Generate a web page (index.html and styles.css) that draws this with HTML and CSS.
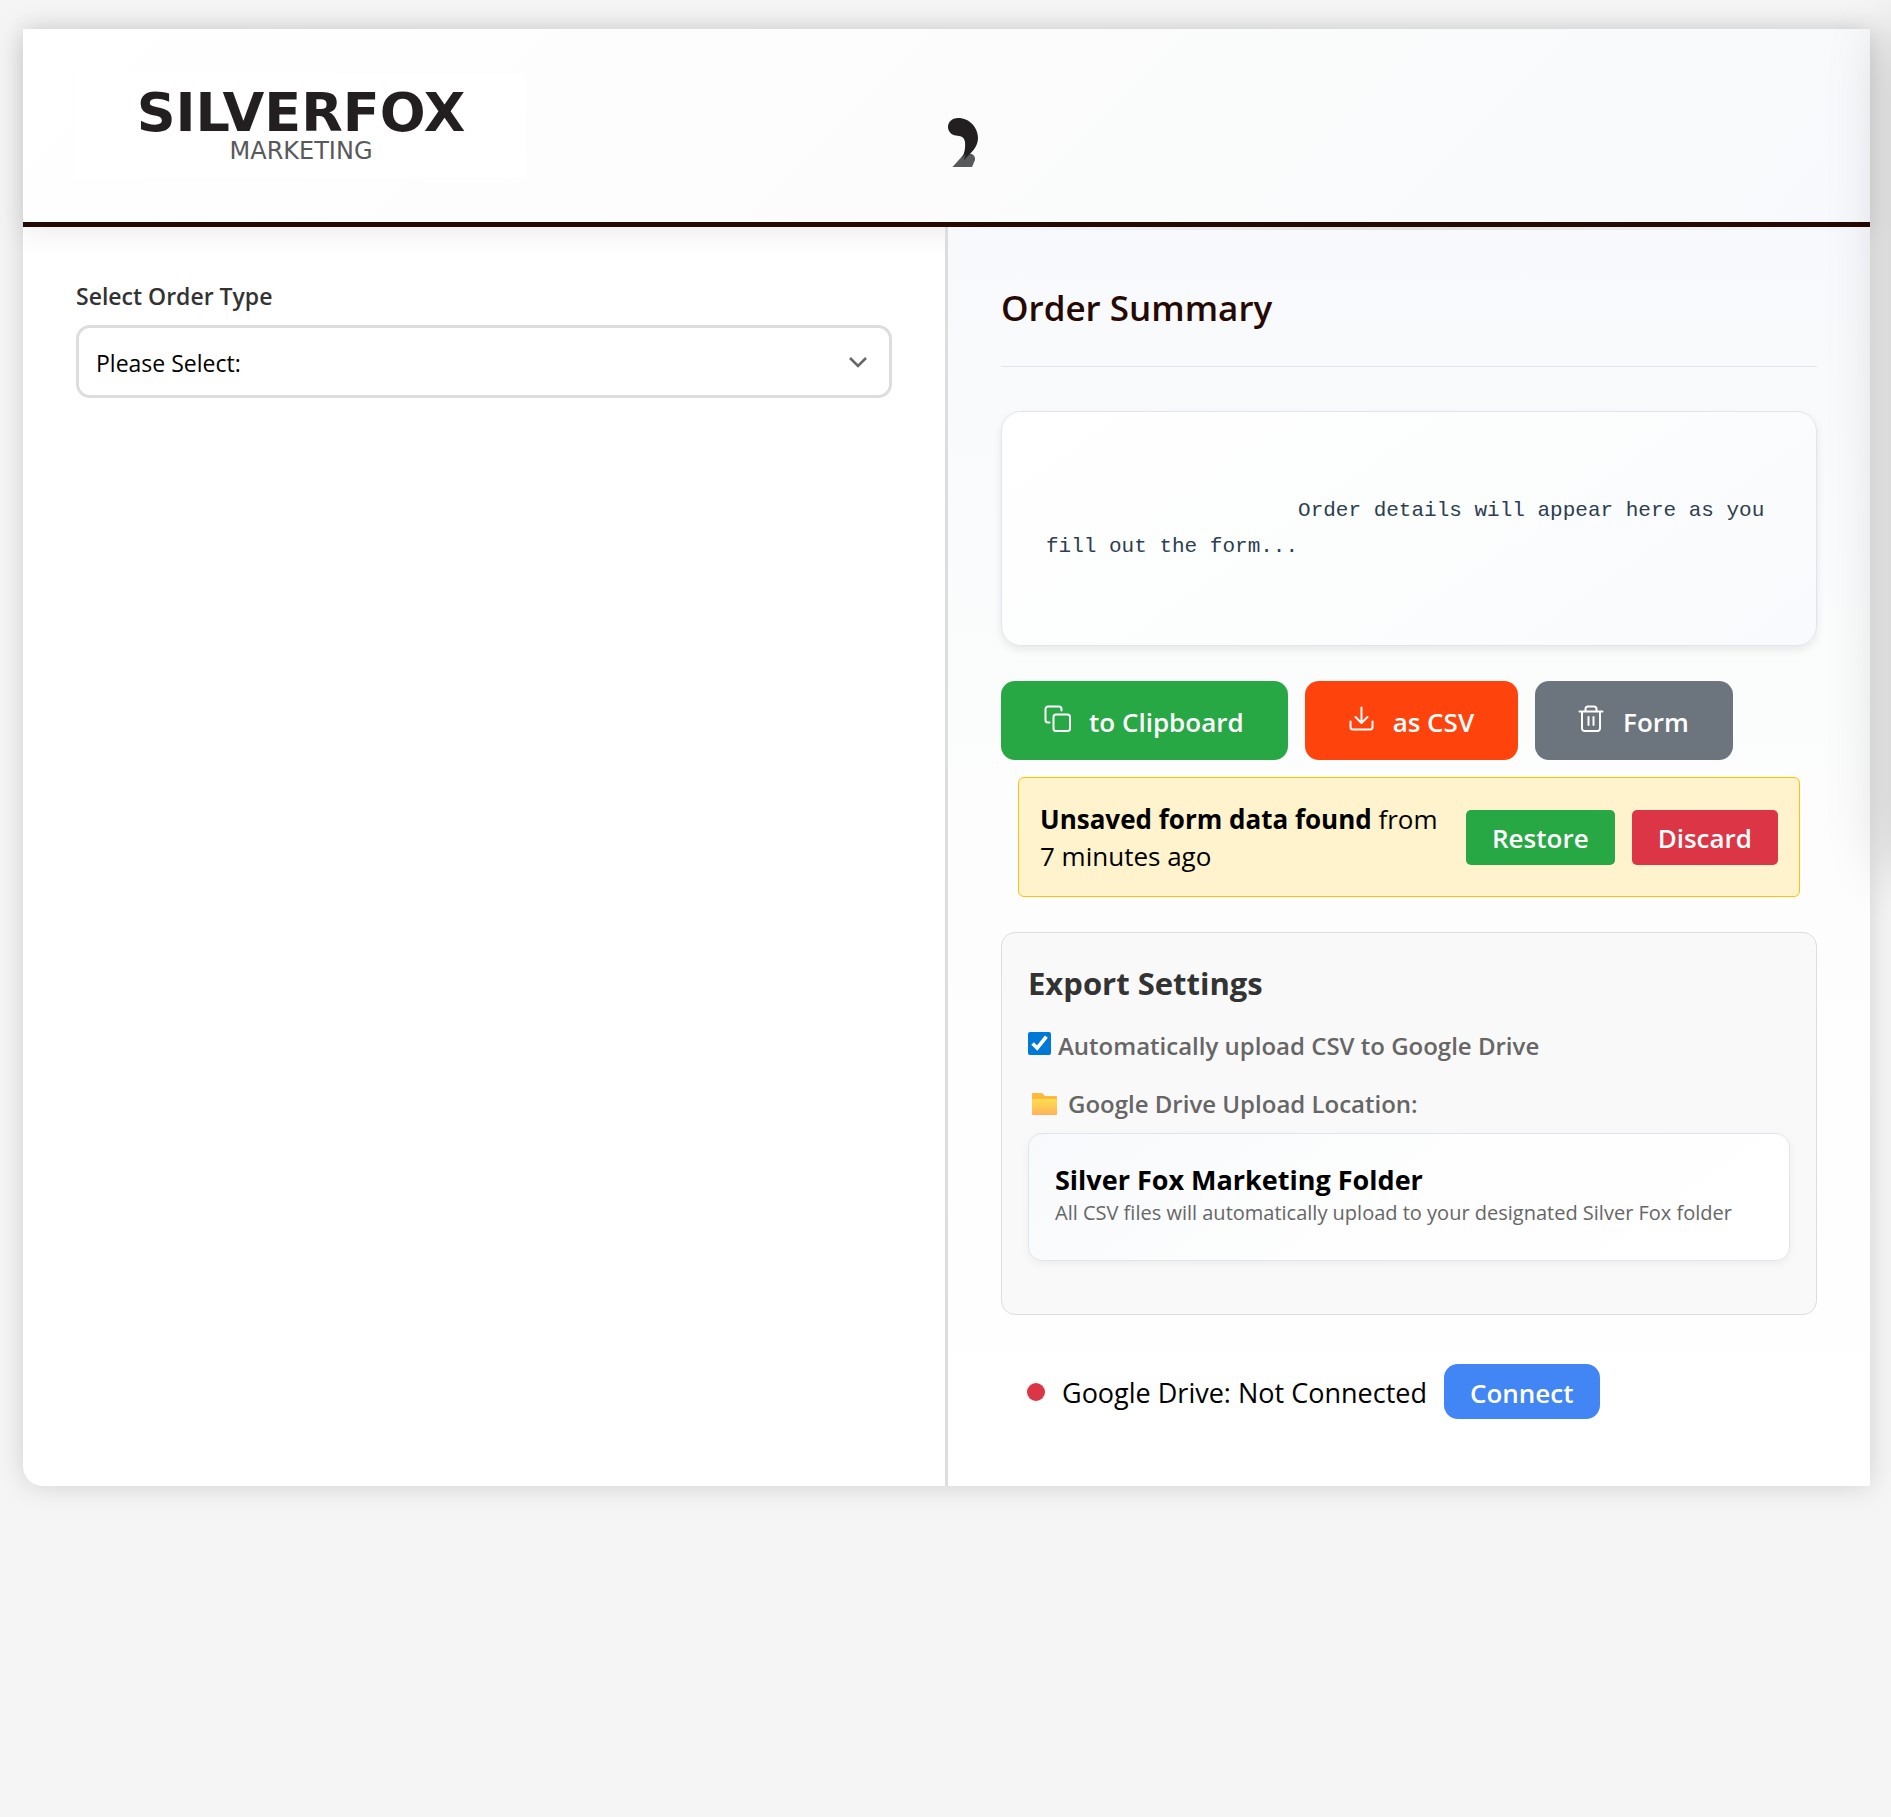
FILE: index.html
```html
<!DOCTYPE html>
<html lang="en">
<head>
<meta charset="utf-8">
<meta name="viewport" content="width=device-width, initial-scale=1">
<title>Silver Fox Marketing – Order Form</title>
<link rel="stylesheet" href="styles.css">
</head>
<body>
<div class="app">
  <header class="header">
    <div class="logo">
      <span class="logo-name">SILVERFOX</span>
      <span class="logo-sub">MARKETING</span>
    </div>
    <svg class="tail" viewBox="-13 -15 120 120" aria-hidden="true">
      <path fill="#58595b" d="M52.500 86 L65 72 L72 73 Q75.500 75 75 79 L72 86 Z"/>
      <path fill="#231f20" d="M58 37 C70 37 78 47 78 57 C78 66 71 72 66 77 L63.500 79.500 L66 73 L62 77 C65 71 65.500 66 65 61 C64 55 60 55 56 54.500 C51 54 48 50 48 46 C48 41 52 37 58 37 Z"/>
    </svg>
  </header>
  <main class="columns">
    <section class="form-pane">
      <label class="field-label" for="order-type">Select Order Type</label>
      <div class="select-wrap">
        <select id="order-type" class="select"><option>Please Select:</option></select>
        <svg class="chevron" viewBox="0 0 20 20" aria-hidden="true"><path d="M2 6 L10 14 L18 6"/></svg>
      </div>
    </section>
    <div class="divider"></div>
    <section class="summary-pane">
      <h2 class="summary-title">Order Summary</h2>
      <div class="summary-box">
                    Order details will appear here as you fill out the form...
                </div>
      <div class="actions">
        <button class="btn btn-copy" type="button">
          <svg class="icon" viewBox="0 0 28 28" aria-hidden="true"><rect x="9.500" y="9.500" width="16.500" height="16.500" rx="2.500"/><path d="M5.500 17.500 H4 A2.500 2.500 0 0 1 1.500 15 V4 A2.500 2.500 0 0 1 4 1.500 H15 A2.500 2.500 0 0 1 17.500 4 V5.500"/></svg>
          to Clipboard</button>
        <button class="btn btn-csv" type="button">
          <svg class="icon" viewBox="0 0 28 28" aria-hidden="true"><path d="M2.500 16.500 V22 A2.500 2.500 0 0 0 5 24.500 H22 A2.500 2.500 0 0 0 24.500 22 V16.500"/><path d="M13.500 2.500 V17.500 M7.500 12 L13.500 18 L19.500 12"/></svg>
          as CSV</button>
        <button class="btn btn-clear" type="button">
          <svg class="icon" viewBox="0 0 28 28" aria-hidden="true"><path d="M1.500 6.500 H24.500 M7.500 6.500 V4 A2.500 2.500 0 0 1 10 1.500 H16 A2.500 2.500 0 0 1 18.500 4 V6.500 M4 6.500 V23.500 A2.500 2.500 0 0 0 6.500 26 H19.500 A2.500 2.500 0 0 0 22 23.500 V6.500 M10.500 12 V20 M15.500 12 V20"/></svg>
          Form</button>
      </div>
      <div class="notice" role="status">
        <p class="notice-text"><strong>Unsaved form data found</strong> from 7&nbsp;minutes ago</p>
        <button class="small-btn restore" type="button">Restore</button>
        <button class="small-btn discard" type="button">Discard</button>
      </div>
      <section class="export">
        <h3 class="export-title">Export Settings</h3>
        <div class="check-row">
          <input id="auto-upload" class="check" type="checkbox" checked>
          <label for="auto-upload">Automatically upload CSV to Google Drive</label>
        </div>
        <div class="location-row">
          <svg class="folder" viewBox="0 0 26 24" aria-hidden="true">
            <defs><linearGradient id="fold" x1="0" y1="0" x2="0" y2="1"><stop offset="0" stop-color="#ffdd50"/><stop offset="1" stop-color="#ffb259"/></linearGradient></defs>
            <path fill="#fdb93c" d="M0 2 Q0 1 1 1 H10 L13 4 H24 Q25 4 25 5 V9 H0 Z"/>
            <rect y="7" width="25" height="16" rx="1" fill="url(#fold)"/>
          </svg>
          Google Drive Upload Location:
        </div>
        <div class="folder-card">
          <strong class="folder-name">Silver Fox Marketing Folder</strong>
          <p class="folder-note">All CSV files will automatically upload to your designated Silver Fox folder</p>
        </div>
      </section>
      <div class="drive-status">
        <span class="dot"></span>
        <span class="status-text">Google Drive: Not Connected</span>
        <button class="small-btn connect" type="button">Connect</button>
      </div>
    </section>
  </main>
</div>
<aside class="drawer" aria-hidden="true"></aside>
</body>
</html>
```
FILE: styles.css
```css
* { box-sizing: border-box; }

html { overflow-x: hidden; }

body {
  margin: 0;
  padding: 29px 21px 29px 23px;
  min-height: 100vh;
  background: #f5f5f5;
  color: #000;
  font-family: "Open Sans", "Noto Sans", sans-serif;
  font-size: 27px;
  line-height: 37px;
  overflow-x: hidden;
}

button, select { font-family: inherit; }
p, h2, h3 { margin: 0; }

.app {
  background: #fff;
  border-radius: 0 0 0 20px;
  box-shadow: 0 0 28px rgba(0, 0, 0, .15);
}

.header {
  position: relative;
  display: grid;
  grid-template-columns: 1fr auto 1fr;
  align-items: center;
  height: 198px;
  padding: 0 53px;
  background: linear-gradient(135deg, #fff 0%, #fbfcfb 50%, #f8f9fc 100%);
  border-bottom: 5px solid #250902;
  box-shadow: 0 6px 28px rgba(0, 0, 0, .08);
}

.logo {
  display: flex;
  flex-direction: column;
  align-items: center;
  width: 450px;
  height: 105px;
  padding-top: 12px;
  background: #fff;
  font-family: "DejaVu Sans", sans-serif;
}
.logo-name { font-size: 54px; font-weight: 700; line-height: 56px; color: #231f20; }
.logo-sub { font-size: 24px; line-height: 20px; color: #58595b; }
.tail { width: 120px; height: 120px; }

.columns { display: grid; grid-template-columns: 1fr 3px 1fr; }
.divider { position: relative; background: #ddd; }

.form-pane { padding: 50px 53px 53px; }

.field-label {
  display: block;
  margin-bottom: 10px;
  font-size: 23px;
  font-weight: 600;
  line-height: 38px;
  color: #333;
}

.select-wrap { position: relative; }
.select {
  width: 100%;
  height: 73px;
  padding: 2px 17px 0;
  appearance: none;
  background: #fff;
  border: 3px solid #ddd;
  border-radius: 14px;
  color: #000;
  font-size: 23px;
}
.chevron {
  position: absolute;
  top: 27px;
  right: 24px;
  width: 20px;
  height: 20px;
  fill: none;
  stroke: #666;
  stroke-width: 2.500;
  pointer-events: none;
}

.summary-pane {
  position: relative;
  padding: 53px 53px 67px;
  background: linear-gradient(180deg, #f8f9fc 0%, #fcfdfc 50%, #fff 100%);
}
.summary-pane::before {
  content: "";
  position: absolute;
  top: 0;
  left: 0;
  right: 0;
  height: 3px;
  background: linear-gradient(90deg, transparent, #e0e0e0, transparent);
}

.summary-title {
  margin-bottom: 44px;
  padding-bottom: 31px;
  border-bottom: 1px solid #e1e5eb;
  font-size: 35px;
  font-weight: 600;
  line-height: 55px;
  color: #250902;
}

.summary-box {
  padding: 45px 44px 44px;
  background: linear-gradient(145deg, #fff 0%, #fcfdfd 50%, #f9fafd 100%);
  border: 1px solid #e1e5eb;
  border-radius: 20px;
  box-shadow: 0 4px 8px rgba(0, 0, 0, .08);
  color: #2c3e50;
  font-family: "Liberation Mono", monospace;
  font-size: 21px;
  line-height: 36px;
  white-space: pre-wrap;
}

.actions { display: flex; gap: 17px; margin-top: 35px; }
.btn {
  display: flex;
  align-items: center;
  gap: 17px;
  height: 79px;
  padding: 2px 44px 0 43px;
  border: 0;
  border-radius: 14px;
  color: #fff;
  font-size: 26px;
  font-weight: 600;
}
.icon {
  width: 28px;
  height: 28px;
  margin-bottom: 6px;
  fill: none;
  stroke: #fff;
  stroke-width: 2;
  stroke-linecap: round;
  stroke-linejoin: round;
}
.btn-copy { background: #28a745; }
.btn-csv { background: #ff430d; }
.btn-clear { background: #6c757d; }

.notice {
  display: flex;
  align-items: center;
  gap: 17px;
  margin: 17px 17px 35px;
  padding: 21px;
  background: #fff3cd;
  border: 1px solid #ffc107;
  border-radius: 6px;
}
.notice-text { flex: 1; padding-top: 2px; font-size: 26px; }

.small-btn {
  height: 55px;
  padding: 2px 26px 0;
  border: 0;
  border-radius: 5px;
  color: #fff;
  font-size: 26px;
  font-weight: 600;
}
.restore { background: #28a745; }
.discard { background: #dc3545; }
.connect { background: #4285f4; border-radius: 14px; }

.export {
  padding: 26px 26px 53px;
  background: #f9f9f9;
  border: 1px solid #ddd;
  border-radius: 14px;
}
.export-title {
  font-size: 31px;
  font-weight: 700;
  line-height: 48px;
  color: #333;
}
.check-row, .location-row {
  display: flex;
  align-items: center;
  color: #666;
  font-size: 24px;
  font-weight: 600;
}
.check-row { gap: 7px; margin-top: 20px; }
.check {
  width: 23px;
  height: 23px;
  margin: 0 0 4px;
  accent-color: #0078d7;
}
.location-row { gap: 10px; margin: 21px 0 11px; padding-left: 4px; }
.folder { width: 26px; height: 24px; }

.folder-card {
  padding: 27px 26px 33px;
  background: linear-gradient(145deg, #f8f9fc 0%, #fdfefd 50%, #fff 100%);
  border: 1px solid #e1e5eb;
  border-radius: 14px;
  box-shadow: 0 3px 10px rgba(0, 0, 0, .05);
}
.folder-name { display: block; }
.folder-note { font-size: 20px; line-height: 29px; color: #666; }

.drive-status {
  display: flex;
  align-items: center;
  gap: 17px;
  margin-top: 49px;
  padding-left: 26px;
}
.status-text { padding-top: 2px; }
.dot {
  width: 18px;
  height: 18px;
  border-radius: 50%;
  background: #dc3545;
}

.drawer {
  position: fixed;
  top: 0;
  left: 100%;
  width: 400px;
  height: 836px;
  box-shadow: 0 30px 60px rgba(0, 0, 0, .2);
}
```
